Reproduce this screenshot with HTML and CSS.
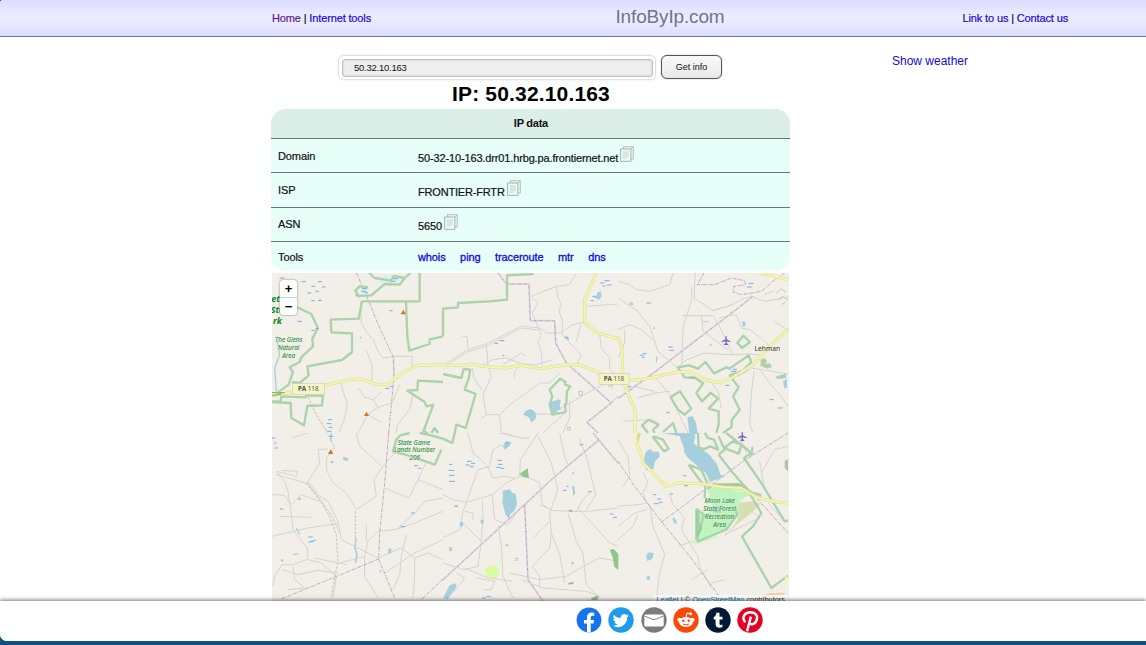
FILE: index.html
```html
<!DOCTYPE html>
<html lang="en">
<head>
<meta charset="utf-8">
<title>InfoByIp.com</title>
<link rel="stylesheet" href="styles.css">
</head>
<body>
<svg class="defs" width="0" height="0">
  <symbol id="copy" viewBox="0 0 14 16"><path d="M3.500 3V.7h9.800V13H11" fill="#e8f6f2" stroke="#b0c4bf"/><path d="M11 3l2-2" stroke="#b0c4bf"/><path d="M.6 3h10.300v12.300H.6z" fill="#f1faf7" stroke="#a0b4af"/><path d="M2.500 6H9M2.500 8H9M2.500 10H9M2.500 12H7" stroke="#c3d2ce" fill="none"/></symbol>
</svg>
<div class="window">
<header class="topbar">
  <div class="topbar-inner">
    <nav class="nav"><a class="visited" href="#">Home</a> | <a href="#">Internet tools</a></nav>
    <div class="brand">InfoByIp.com</div>
    <nav class="nav nav-right"><a href="#">Link to us</a> | <a href="#">Contact us</a></nav>
  </div>
</header>
<div class="content">
  <main class="main">
    <form class="search">
      <div class="field"><input class="ip" type="text" value="50.32.10.163"></div>
      <button class="go" type="button">Get info</button>
    </form>
    <h1 class="title">IP: 50.32.10.163</h1>
    <section class="info">
      <div class="info-head">IP data</div>
      <div class="row"><span class="key">Domain</span><span class="val domain">50-32-10-163.drr01.hrbg.pa.frontiernet.net</span><svg class="copy"><use href="#copy"/></svg></div>
      <div class="row"><span class="key">ISP</span><span class="val isp">FRONTIER-FRTR</span><svg class="copy"><use href="#copy"/></svg></div>
      <div class="row"><span class="key">ASN</span><span class="val asn">5650</span><svg class="copy"><use href="#copy"/></svg></div>
      <div class="row tools"><span class="key">Tools</span><span class="links"><a href="#">whois</a><a href="#">ping</a><a href="#">traceroute</a><a href="#">mtr</a><a href="#">dns</a></span></div>
    </section>
    <div class="map">
      <svg class="canvas" viewBox="272 273 517 328">
        <rect x="272" y="273" width="517" height="328" fill="#f2efe9"/>
        <!-- north west -->
        <g transform="translate(268 268) scale(.33333)">
          <path class="road" d="M278 102L280 165L300 200L315 212L330 250L345 270L378 265M378 265L432 265L432 305M378 265L378 325M295 248L312 290L312 345M270 360L290 388L316 395L330 418L300 440L275 485L270 495M340 372L316 395M338 462L300 440M372 405L330 418M372 405L395 350M218 345L238 410L230 450L212 495M384 495L388 470L425 425L435 380M470 495L480 450"/>
          <path class="track" d="M120 388L145 440L170 480L180 495"/>
          <path class="border" d="M265 15L290 70L335 180L375 265L378 325L362 495"/>
          <path class="water" d="M275 60q18-12 28 8q-8 18-28 12z M318 52l22-14l-8-12l50-8l28 6l-25 24l-40-4z"/>
          <path class="stream" d="M28 220L35 260L20 300L25 370"/>
          <path class="park" d="M303 15L320 30L368 38L378 24L410 30L428 14M410 30L395 50L350 48L310 82L272 84L262 68L275 55L300 58M262 80L275 86M455 15L455 100L282 100L272 152L188 155L190 193L252 196L252 252L222 276L118 295L122 322L95 345L72 342M28 374L62 350L75 312L65 298L95 282L100 268L135 235L133 212L150 180L130 138L88 118M414 100L418 205L424 248L485 228L485 214L525 205M12 400L38 400L40 385L112 388L115 382L165 384L162 412L118 414L108 472L70 450L68 405L12 402M525 342L450 338L448 366L418 368L470 402L476 415L496 410L466 490L480 495M490 495L500 480L510 495"/>
          <path class="hi-case" d="M12 383L60 374L172 352L245 335L275 332L320 348L355 350L415 308L450 292L525 290"/>
          <path class="hi" d="M12 383L60 374L172 352L245 335L275 332L320 348L355 350L415 308L450 292L525 290"/>
          <path class="dark" d="M12 374L50 374M12 383L40 378"/>
          <path class="marsh" d="M35 30h14M100 41h14M130 55h12M150 41h12M162 57h10M142 70h10M130 98h10M150 97h12M88 160h14M130 187h10M142 182h10M364 128h10M118 75h12M368 40h14M376 32h14M282 62h14M280 70h14M290 74h10M352 361h12M366 355h10M180 455h12M176 467h14M182 478h12M178 490h12"/>
          <path class="lake" d="M275 206h6v5h-6z"/>
          <path class="peak" d="M398 139l8-14l8 14zM288 444l7-13l8 13z"/>
          <g class="parktext big"><text x="10" y="101">eti</text><text x="8" y="135">Sta</text><text x="15" y="169">rk</text></g>
          <g class="parktext"><text x="62" y="221">The Glens</text><text x="62" y="245">Natural</text><text x="62" y="269">Area</text></g>
          <rect class="shield" x="73" y="347" width="96" height="33"/><text class="ref" x="121" y="370"><tspan class="strong">PA</tspan> 118</text>
        </g>
        <!-- north -->
        <g transform="translate(443 268) scale(.33333)">
          <path class="road" d="M10 285L75 245L130 228L185 200L235 174L290 180L310 195L355 195L385 172L420 162M10 292L75 251L130 235L185 206L235 180L290 186M400 15L380 50L340 55L265 85M340 55L345 90L355 110L348 130L358 155L358 200L385 230L415 262L400 290M265 85L285 105L268 135L280 165L295 200L285 220L295 250L298 290M58 205L72 205L75 240M130 228L135 290L145 325L120 380L130 440L170 440L200 410L250 375L290 345L320 345L350 315M88 300L92 330L120 370M120 290L150 275L190 270L235 288L280 290L330 275M235 288L215 310L215 330M180 290L235 255L248 265M430 115L525 108M415 165L400 220M470 200L475 240L500 270L500 305L520 320M270 438L325 438L450 365L500 340M300 495L365 435M360 495L380 450L380 400M115 450L130 440M170 440L175 495"/>
          <path class="border-case" d="M165 15L190 48L258 48L262 158L335 158L338 225L370 285L505 405L432 463L465 495"/>
          <path class="border" d="M165 15L190 48L258 48L262 158L335 158L338 225L370 285L505 405L432 463L465 495M505 405L525 385"/>
          <path class="park" d="M0 205L0 122L45 118L45 105L138 100L192 95L192 22L272 18M0 318L55 330L62 303L82 305L76 335L65 365L98 378L68 480L40 470L35 495M352 332L320 365L328 385L320 410L328 440L360 434L368 432L366 410L370 405L372 370L382 355L366 350L368 343z"/>
          <path class="hi-case" d="M0 292L60 292L85 288L130 296L190 300L235 292L290 302L370 290L410 290L475 318M460 15L425 95L425 165L465 195L525 212"/>
          <path class="hi" d="M0 292L60 292L85 288L130 296L190 300L235 292L290 302L370 290L410 290L475 318M460 15L425 95L425 165L465 195L525 212"/>
          <path class="lake" d="M320 398l12 2l14-6l8 4l-4 12l4 14l-12 4l-4 12l-12-10zM240 440q10-16 24-16q16 6 16 22q-4 14-18 16q2-16-22-22zM462 75l12-6l2 16l-10 12l-6-10zM368 205l10 4v8l-10-4z"/>
          <path class="marsh" d="M170 218h14M155 226h10M472 45h12M485 38h15M478 54h10M492 51h14M448 85h10M443 98h10M455 88h8M178 262h6M365 208h10"/>
          <path class="building" d="M408 370h10v12h-10zM374 478h8v8h-8zM495 355l12-5v10"/>
        </g>
        <!-- north east -->
        <g transform="translate(618 268) scale(.33333)">
          <path class="road" d="M0 90L60 130L95 175L120 250L160 285L180 298M0 40L35 50L55 65L95 70L155 50L165 15M220 55L222 90L195 180L192 285M232 15L228 90L285 128L330 115L370 95L400 85L440 100L525 85M192 143L285 143L300 165L345 262M250 140L255 190L330 245M285 128L345 110M302 150L355 140L370 180L395 185L430 210L450 230M180 298L205 276L260 255L330 260L395 258L430 262M468 160L500 180L525 190M0 185L35 170L70 185L105 215M440 80L465 70M425 305L455 345L485 380L510 415M408 310L400 380L395 470L405 495M395 305L360 325M270 330L300 370L310 420M110 325L155 380L180 430L210 495M20 365L45 355L110 370M60 390L110 375L155 370M15 460L90 455M0 270L20 225L20 185M400 300L510 318"/>
          <path class="border" d="M258 15L238 50L290 50L340 30L380 38L382 50L348 55L345 72L370 80L430 70L465 40L500 15"/>
          <path class="border-case" d="M404 85L380 105L100 320L0 392"/><path class="border" d="M404 85L380 105L100 320L0 392"/>
          <path class="park" d="M180 298L212 292L240 302L262 282L288 316L325 298L335 302L392 262L400 282L375 308L335 322L362 358L345 385L365 425L342 455L340 478L315 495M178 296L200 328L232 330L255 346L235 375L252 400L278 374L300 392L272 422L302 430L302 470L295 495M376 203L396 222L372 240L358 224zM186 370L220 422L200 440L180 425L158 388zM92 455L122 470L105 486L110 495M92 455L72 472L90 495M135 492L165 465L175 495"/>
          <path class="hi-case" d="M0 332L60 336L95 330L180 312L215 312L270 338L310 345L340 330L405 290L460 230L510 185M0 205L12 240L15 340L40 400L52 430L50 495M425 15L470 25L510 35"/>
          <path class="hi" d="M0 332L60 336L95 330L180 312L215 312L270 338L310 345L340 330L405 290L460 230L510 185M0 205L12 240L15 340L40 400L52 430L50 495M425 15L470 25L510 35"/>
          <path class="lake" d="M35 102l10 2v8l-10-2zM208 448l16-4l10 20l6 34h-26zM115 265h4l-2 18h-4zM105 178h5v5h-5zM372 162l8-4l3 14l-8 6zM495 340l12-6v26h-8zM275 229h6v5h-6z"/>
          <path class="green" opacity=".7" d="M428 275l12-5l8 10l-6 8l14-2l6 10l-14 6l-20-8zM474 325l30-8v14l-28 2z"/>
          <path class="marsh" d="M85 105h14M150 237h14M154 247h14M65 262h12M75 257h10M72 268h8M387 57h14M392 46h14M338 310h16M345 304h12M215 328h16M322 352h12M455 395h12M145 434h10M480 420h14M28 355h10"/>
          <path class="building" d="M254 161h18M475 75l15-12l15 10M480 95l15-10l15 12M490 110l12-8"/>
          <path class="plane" transform="translate(324 217)" d="M-2-12h4v9l11 6v3l-11-3v6l4 3v2h-12v-2l4-3v-6l-11 3v-3l11-6z"/>
          <text class="town" x="448" y="250">Lehman</text>
        </g>
        <g transform="translate(599 373.500)"><rect class="shield shield-page" width="30" height="10.800"/><text class="ref ref-page" x="15" y="7.800"><tspan class="strong">PA</tspan> 118</text></g>
        <!-- south west -->
        <g transform="translate(268 433) scale(.33333)">
          <path class="road" d="M185 15L200 45L175 75L175 110L195 150L235 180L265 230L325 190L318 140L345 100L380 60M150 50L178 48M150 50L155 90L120 145L155 190L180 205L210 265L220 320L270 345L330 375M25 115L85 130L88 115L40 112M25 115L50 145L60 175L70 245L75 290L118 345L120 378L75 395L42 395L20 430L15 460M25 125L120 152L190 245L215 300M12 185L50 187L70 215L100 185L155 205M35 250L130 253M12 310L120 285L210 272M120 380L160 390L205 430L195 495M42 410L90 425L150 412L210 420M215 390L290 370L300 325L330 295L380 290L440 270L525 235M290 370L290 430L330 495M385 290L440 240L470 205L525 195M350 165L422 195L450 140L475 85M450 140L525 170M415 305L400 370L395 425L375 470M330 375L400 345L440 375L440 430L435 495M440 375L480 360L525 380M350 420L440 360L525 320M265 0L275 40L310 70L340 100M120 0L70 15M75 400L80 440L110 465L60 470M295 275L295 325M140 375L210 390L235 395"/>
          <path class="track" d="M115 150L155 200L185 250L205 305L210 390L200 430L190 495M262 235L262 320L265 385"/>
          <path class="border" d="M362 0L350 150L335 300L332 378L380 495M332 378L40 498M525 438L460 500"/>
          <path class="park" d="M395 8L385 20L375 55L430 70L500 95L520 50M395 8L425 0M455 0L480 5L525 17"/>
          <path class="lake" d="M225 72l14 2l2 10l-14-2zM188 84h8v6h-8zM360 348l10-2v14l-8 4zM38 380l8-2v8h-6zM335 410l5 2v6l-5 2zM92 192l8 4l-4 6h-6z"/>
          <path class="stream" d="M265 315L260 345L268 365L262 390M85 285L95 305M120 330L145 320M75 365L90 362M190 0L188 25"/>
          <path class="marsh" d="M182 10h14M438 98h12M450 106h10M398 281h14M430 240h10M120 312h14M125 325h12M36 228h10M12 15h10M18 30h8M20 45h10"/>
          <path class="peak" d="M180 63l8-14l8 14z"/>
          <g class="parktext"><text x="438" y="35">State Game</text><text x="440" y="58">Lands Number</text><text x="440" y="81">206</text></g>
        </g>
        <!-- south -->
        <g transform="translate(443 433) scale(.33333)">
          <path class="road" d="M0 185L30 200L70 208L150 185L190 150L230 130L232 80L285 0M75 0L90 60L130 95L150 135L180 130L215 135M145 100L105 110L60 235L50 290L0 315M65 235L90 240L90 260M65 275L115 325L105 400L65 410L0 390M118 205L120 250L115 325M148 190L155 260L195 275L230 225M165 275L175 340L180 430L210 495M140 95L150 50L175 35L190 45L210 25M170 0L235 15L260 15M230 130L262 135L290 150L298 215L325 232L390 235L430 235L525 225M285 10L325 90L345 170L320 240L325 300L350 365L365 450M350 0L365 70L375 95M290 215L320 228M375 240L390 290L400 325L420 360L430 455L470 495M408 15L430 70L435 90L458 185L430 230M400 235L420 200L445 175M410 230L455 280L500 330L525 340M268 400L320 345L325 300M268 400L290 430L290 460M200 420L290 440L370 430L420 400L470 375L525 385M235 440L300 465L430 475L470 490M65 405L135 435L210 445M100 435L155 445L145 470L120 470M270 315L295 290L320 265M0 440L50 395M30 480L65 435L40 420M180 0L235 15"/>
          <path class="border-case" d="M0 440L245 215L325 140L468 20M450 0L525 90M245 215L255 440L300 505"/><path class="border" d="M0 440L245 215L325 140L468 20M450 0L525 90M245 215L255 440L300 505"/>
          <path class="lake" d="M178 173l22-4l8 10l10 4l4 30l-8 20l-12 10l-4 14l-10-12l-10-36l2-24zM180 40l10-16l14 4l-4 10l-16 12zM0 495l20-38l15-6l6 4l-5 14l-22 30zM48 270l12-4l2 10l-8 8zM112 260h10v12h-8zM18 342h8l2 10l-8 4zM387 160l6-2l4 24l-6 6zM388 118h6v6h-6zM385 386h7v8h-7zM188 334h8v6h-8z"/>
          <path class="green" d="M230 122l24-16l4 30l-20-6zM500 350l12-2l14 16v46l-12-8l-5-30zM150 425h10v8h-10zM376 450l15-4v6l-15 3zM445 495l20-8v14h-20zM378 230h10v6h-10z"/>
          <path fill="#d8fc9f" d="M125 410l14-12l28 4l2 22l-14 12l-24-6z"/>
          <path class="park" d="M0 17L28 30L35 0"/>
          <path class="marsh" d="M18 94h10M16 112h18M18 127h16M18 145h18M72 85h14M84 91h12M68 96h12M80 101h12M163 82h14M165 94h14M160 103h12M172 106h12M118 495h10M130 490h14M185 30h12M35 220h10M500 243h12M510 253h12M435 176h10M360 172h10M370 160h6M410 35h10"/>
          <path class="building" d="M215 376h8v6h-8M33 218h12"/>
        </g>
        <!-- south east -->
        <g transform="translate(618 433) scale(.33333)">
          <path class="road" d="M75 120L90 145L75 180L85 210L60 215L0 220M95 215L105 280L140 365L125 420L115 495M155 185L165 215L200 255L190 290L240 370L245 400L280 465M0 280L50 240L85 230M0 320L45 280L60 245M320 310L395 230L425 255L320 305M505 270L450 210M320 440L280 450M360 0L385 60M430 120L470 50L510 40M180 340L240 320L270 300M0 20L30 70L35 130L15 160M270 130L290 195M440 170L425 85M220 440L270 410"/>
          <path class="border" d="M0 85L50 160L130 265L215 370L310 498M510 0L375 85L130 268M380 155L510 300"/>
          <path fill="#d8f3d2" d="M240 225L238 310L215 340L300 315L300 290z"/>
          <path fill="#bff3c0" d="M268 166l48-4l84 20l-35 20l4 40l-20 20l-30 30l-84 40v-105l25 20l25-20z"/>
          <path fill="#d5dfb0" d="M400 205l28 8l-38 35l-45 35l20-35l-4-38z"/>
          <path class="lake" d="M135 0l50 10l14 38l-2 6l10 18l56 48l14 26l45-16l-15-5l-10-32l-25-30l-30-20l-15-12l5-20l-4-11zM83 58l12-10l10 8h18l2 16l-14 12l-5 24l-22 2l-6-28zM85 366l8-8l14 2l-4 18l-16 6zM86 430h10v10h-10zM163 258l6-6l8 18l-6 4zM400 42l6-2v24l-10 10zM285 220l24 2v18l-24-4z"/>
          <path class="park" d="M112 12L135 20L152 48L138 55L105 12zM212 96L248 145L262 160L260 195M212 95L250 110L268 150M240 0L242 45L260 48L276 40L300 50L288 20L270 15L260 0M345 25L370 35L362 62L330 50L322 42zM302 65L320 50L302 10M325 0L400 60L378 75L430 150L500 265L510 262M302 65L345 120L385 165L430 240L405 280L372 310L460 465L510 428M235 228L258 245L245 292L238 312L240 325L300 300L325 290L358 245L352 225M235 228V320M268 166L290 155L372 155L400 185"/>
          <path class="green" opacity=".6" d="M235 230l10 12v25l8 20l-10 20l-8 10zM290 152l70-2l40 28l-20-4zM385 170l45 12v10l-38-10z"/>
          <path class="hi-case" d="M65 0L55 30L70 65L75 90L120 135L145 160L180 150L250 152L315 162L370 165L420 195L480 208L510 210"/>
          <path class="hi" d="M51 -3L55 30L70 65L75 90L120 135L145 160L180 150L250 152L315 162L370 165L420 195L480 208L510 210M500 460L505 430"/>
          <path d="M435 492L455 483L500 482" stroke="#f6cf9c" stroke-width="6"/>
          <path class="marsh" d="M118 198h12M108 212h14M122 208h12M105 185h10M195 128h10M155 183h10M198 158h12"/>
          <path fill="#bbb" d="M500 85l10-8v38l-10-10z"/>
          <path class="plane" transform="translate(373 10)" d="M-2-12h4v9l11 6v3l-11-3v6l4 3v2h-12v-2l4-3v-6l-11 3v-3l11-6z"/>
          <g class="parktext"><text x="305" y="211">Moon Lake</text><text x="305" y="234">State Forest</text><text x="305" y="258">Recreation</text><text x="305" y="281">Area</text></g>
        </g>
      </svg>
      <div class="zoom"><span>+</span><span>−</span></div>
      <div class="credit"><a href="#">Leaflet</a> | © <a href="#">OpenStreetMap</a> contributors</div>
    </div>
  </main>
  <aside class="side"><a href="#">Show weather</a></aside>
</div>
<footer class="share">
  <svg viewBox="0 0 26 26"><circle cx="13" cy="13" r="12.400" fill="#1673eb"/><path fill="#fff" d="M11 25.200v-8.700H8v-3.600h3v-2.700c0-3 1.800-4.700 4.600-4.700 1.300 0 2.600.3 2.600.3v2.900h-1.500c-1.500 0-2 .9-2 1.900v2.300h3.400l-.6 3.600h-2.800v8.700z"/></svg>
  <svg viewBox="0 0 26 26"><circle cx="13" cy="13" r="12.700" fill="#1d9bed"/><path fill="#fff" d="M20.900 8.600a6.500 6.500 0 0 1-1.900.5 3.200 3.200 0 0 0 1.400-1.800 6.500 6.500 0 0 1-2.100.8 3.300 3.300 0 0 0-5.600 3 9.300 9.300 0 0 1-6.800-3.400 3.300 3.300 0 0 0 1 4.400 3.300 3.300 0 0 1-1.500-.4c0 1.600 1.100 2.900 2.600 3.200a3.300 3.300 0 0 1-1.500.1 3.300 3.300 0 0 0 3.100 2.300 6.600 6.600 0 0 1-4.900 1.300 9.300 9.300 0 0 0 14.400-8.300c.7-.5 1.300-1 1.800-1.700z"/></svg>
  <svg viewBox="0 0 26 26"><circle cx="13" cy="13" r="12.700" fill="#7c7c7c"/><rect x="3.300" y="7.600" width="19.400" height="11.800" rx="1.300" fill="#fff"/><path d="M3.500 9l7.800 3.300q1.700.6 3.400 0L22.500 9" fill="none" stroke="#777" stroke-width=".9"/></svg>
  <svg viewBox="0 0 26 26"><circle cx="13" cy="13" r="12.700" fill="#fd4705"/><g fill="#fff"><ellipse cx="13" cy="15" rx="7" ry="5"/><circle cx="6.300" cy="12.700" r="2"/><circle cx="19.700" cy="12.700" r="2"/><circle cx="17.600" cy="6.800" r="1.500"/></g><path d="M13 10.500l1-4.500 3.200.7" stroke="#fff" fill="none"/><g fill="#fd4705"><circle cx="10.300" cy="13.800" r="1.200"/><circle cx="15.700" cy="13.800" r="1.200"/></g><path d="M10 17q3 1.900 6 0" fill="none" stroke="#fd4705"/></svg>
  <svg viewBox="0 0 26 26"><circle cx="13" cy="13" r="12.700" fill="#001935"/><path fill="#fff" d="M11.400 5.800h3.100v3.900h3v2.800h-3v4.200c0 1.500 1.400 1.600 2.900.8v2.600c-3.200 1.300-6.800.5-6.800-2.900v-4.700H8.700V10c1.700-.5 2.500-1.900 2.700-4.200z"/></svg>
  <svg viewBox="0 0 26 26"><circle cx="13" cy="13" r="12.700" fill="#e60023"/><path d="M8.300 15.200C4.200 10.300 7.700 5.200 13.500 5.200c4.600 0 7.200 2.900 6.500 6.500-.8 5.400-6.100 7.100-8 3.900M13.900 9.600L10 24.200" fill="none" stroke="#fff" stroke-width="2.400"/></svg>
</footer>
</div>
</body>
</html>
```
FILE: styles.css
```css
* { box-sizing: border-box; }
body { margin: 0; width: 1146px; height: 645px; overflow: hidden; background: #10507f; font-family: "Liberation Sans", Arial, sans-serif; font-size: 11px; color: #111; }
a { color: #1508dc; text-decoration: none; }
.defs { position: absolute; }
.window { height: 641px; background: #fff; overflow: hidden; border-radius: 3px 0 0 7px; display: flex; flex-direction: column; }
.topbar { flex: none; height: 37px; background: linear-gradient(#dcdcff, #eeeeff 50%, #dcdcff); border-bottom: 1px solid #777799; }
.topbar-inner { width: 796px; height: 36px; margin-left: 272px; display: grid; grid-template-columns: 1fr auto 1fr; align-items: center; }
.nav { font-size: 11px; letter-spacing: -.14px; -webkit-text-stroke: .2px; white-space: nowrap; }
.nav-right { text-align: right; }
.visited { color: #551a8b; }
.brand { font-size: 19px; letter-spacing: -.15px; color: #73738c; padding-bottom: 3px; }
.content { flex: none; height: 564px; display: flex; padding-left: 271px; }
.main { width: 520px; display: flex; flex-direction: column; }
.search { display: flex; align-items: center; gap: 5px; margin: 17px 0 0 67px; height: 26px; }
.field { width: 318px; height: 25px; padding: 3px; border: 1px solid #e1e1e1; border-radius: 6px; box-shadow: 0 0 2px #ddd; }
.ip { display: block; width: 311px; height: 18px; border: 1px solid #c2c2c2; border-radius: 3px; background: #eee; box-shadow: inset 0 0 2px #bbb; padding: 0 11px; font: 9.500px "Liberation Sans", sans-serif; letter-spacing: -.24px; color: #111; }
.go { width: 61px; height: 24px; padding: 0; border: 1px solid #555; border-radius: 6px; background: linear-gradient(#f8f8f8, #e9e9e9); box-shadow: 0 0 1px #555; font: 9px "Liberation Sans", sans-serif; color: #111; }
.title { margin: 0; height: 29px; font-size: 21px; letter-spacing: .16px; line-height: 27px; text-align: center; color: #000; }
.info { width: 519px; height: 162px; margin-left: .4px; border-radius: 15px; overflow: hidden; background: #e7fef9; }
.info-head { height: 29px; background: #dceee8; text-align: center; font-weight: bold; line-height: 29px; letter-spacing: -.25px; }
.row { height: 34.250px; border-top: 1px solid #667b75; display: flex; padding: 0 0 0 6.600px; align-items: center; }
.row.tools { height: 32px; }
.key, .val { -webkit-text-stroke: .2px; }
.key { width: 140px; letter-spacing: -.1px; }
.val { padding-top: 4px; }
.domain { letter-spacing: -.14px; }
.isp { letter-spacing: -.18px; }
.asn { letter-spacing: -.15px; }
.copy { width: 14px; height: 16px; margin: -4px 0 0 2px; fill: none; }
.links { display: flex; gap: 14.500px; letter-spacing: -.1px; -webkit-text-stroke: .3px; }
.map { position: relative; width: 517px; height: 328px; margin: 2px 0 0 1px; overflow: hidden; }
.canvas { display: block; width: 517px; height: 328px; fill: none; }
.canvas path { stroke-linejoin: round; }
.road { stroke: #d6d2cf; stroke-width: 3; }
.track { stroke: #cfcbc9; stroke-width: 4; stroke-dasharray: 8 4; }
.border-case { stroke: #e4dae2; stroke-width: 6; }
.border { stroke: #bba7bb; stroke-width: 3; stroke-dasharray: 10 3 3 3; }
.park { stroke: #acd2ac; stroke-width: 7; }
.hi-case { stroke: #d8d99a; stroke-width: 9; }
.hi { stroke: #f5f6a8; stroke-width: 6; }
.dark { stroke: #8db672; stroke-width: 4; }
.water { fill: #deefed; stroke: none; }
.lake { fill: #a5cfdd; stroke: none; }
.stream { stroke: #a5cfdd; stroke-width: 4; }
.marsh { stroke: #78aede; stroke-width: 3; }
.green { fill: #91c58b; stroke: none; }
.peak { fill: #d0742a; stroke: none; }
.plane { fill: #8461c4; stroke: none; }
.building { stroke: #c6c6c2; stroke-width: 3; }
.parktext { font: italic 19px "Noto Sans", sans-serif; fill: #148330; text-anchor: middle; stroke: #e3f1dc; stroke-width: 2; paint-order: stroke; }
.parktext.big { font-size: 27px; font-weight: bold; text-anchor: start; }
.shield { fill: #f4f4c5; stroke: #c6c694; stroke-width: 1.500; }
.shield-page { stroke-width: .5; }
.ref { font: 19px "Noto Sans", sans-serif; fill: #555; text-anchor: middle; }
.ref-page { font-size: 6.300px; }
.strong { font-weight: bold; }
.town { font: 20px "Noto Sans", sans-serif; fill: #333; text-anchor: middle; }
.zoom { position: absolute; left: 8px; top: 7px; width: 17px; height: 35px; border-radius: 3px; background: #fff; box-shadow: 0 0 2px #666; display: grid; grid-template-rows: 1fr 1fr; text-align: center; font: bold 13px/17px "Liberation Sans", sans-serif; color: #000; }
.zoom span + span { border-top: 1px solid #ccc; }
.credit { position: absolute; right: 1px; top: 322px; padding: 0 3px; background: rgba(255,255,255,.7); font-size: 7.400px; line-height: 10px; white-space: nowrap; color: #333; }
.credit a { color: #0078a8; }
.side { margin-left: 101px; padding-top: 17px; font-size: 12px; }
.share { flex: none; position: relative; height: 40px; background: #fff; box-shadow: 0 -1px 4px rgba(0,0,0,.55); display: flex; gap: 6.300px; padding: 6px 0 0 576px; }
.share svg { flex: none; width: 26px; height: 26px; }
```
